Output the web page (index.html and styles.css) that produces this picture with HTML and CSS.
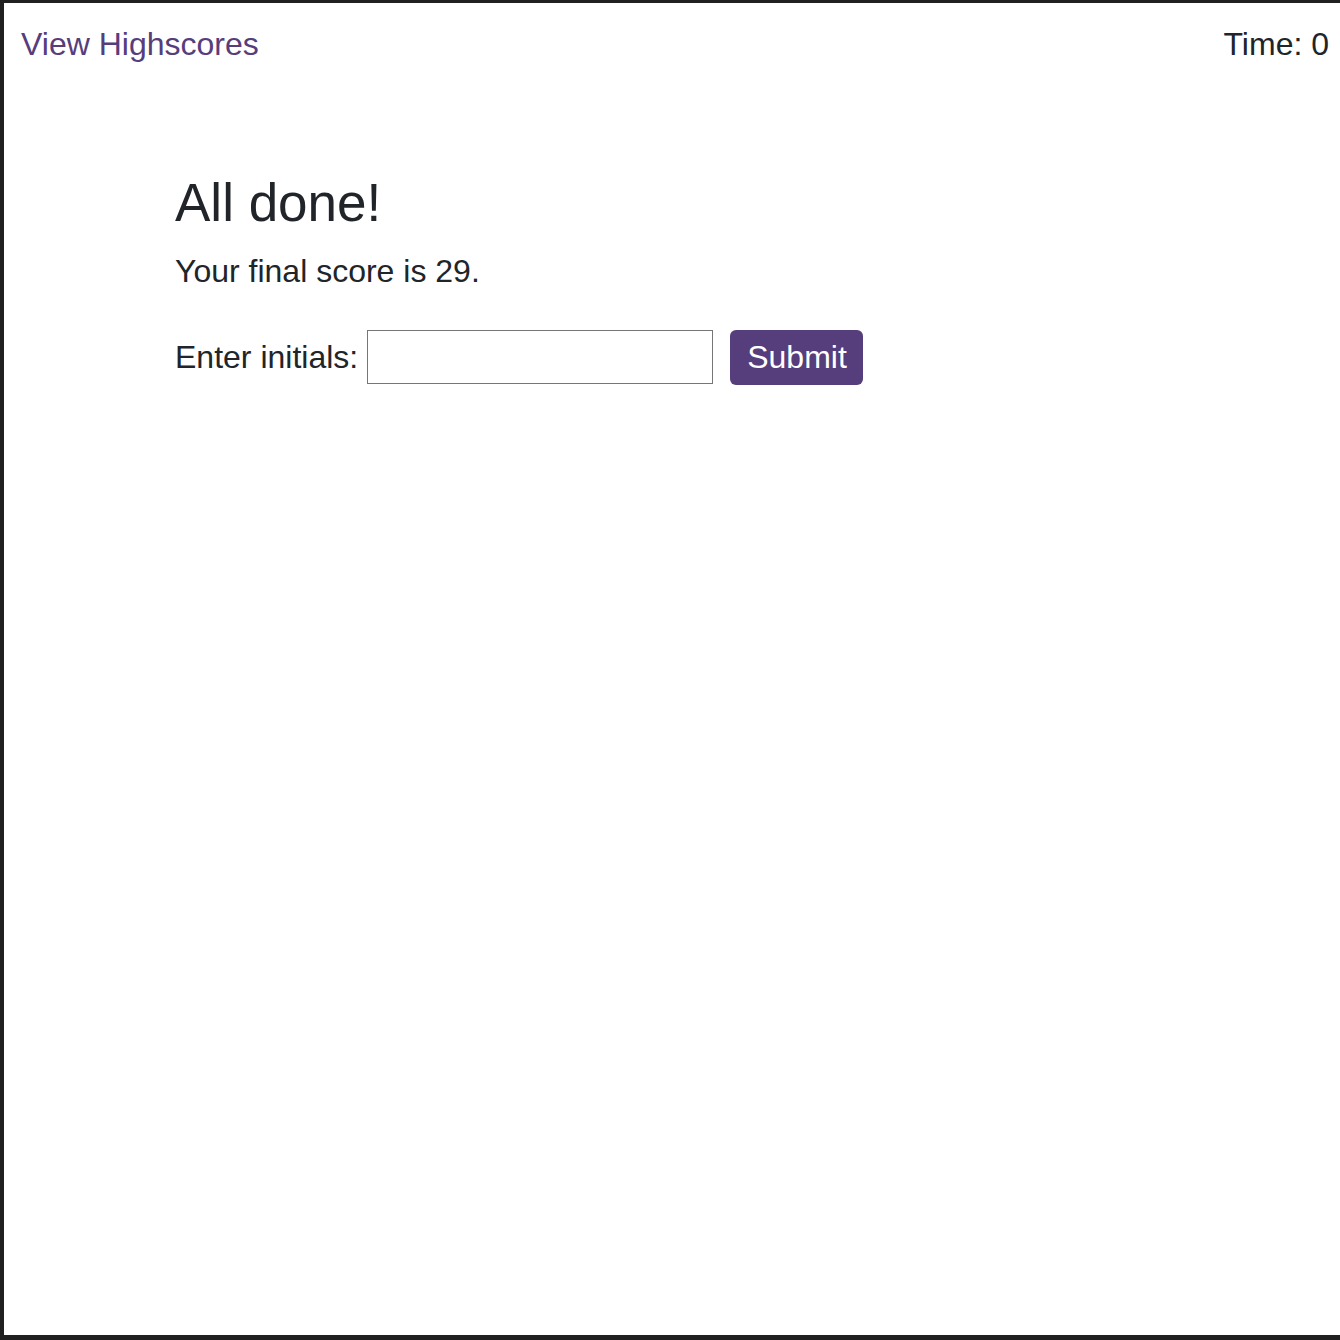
FILE: index.html
```html
<!DOCTYPE html>
<html>
<head>
<meta charset="utf-8">
<link rel="stylesheet" href="styles.css">
</head>
<body>
<div class="frame">
  <header class="topbar">
    <a class="highscores" href="#">View Highscores</a>
    <div class="timer">Time: 0</div>
  </header>
  <main class="content">
    <h1 class="title">All done!</h1>
    <p class="score">Your final score is 29.</p>
    <form class="entry">
      <label class="label" for="initials">Enter initials:</label>
      <input class="input" id="initials" type="text">
      <button class="submit" type="button">Submit</button>
    </form>
  </main>
</div>
</body>
</html>
```
FILE: styles.css
```css
html, body {
  margin: 0;
  padding: 0;
  background: #202020;
}
.frame {
  box-sizing: border-box;
  height: 1340px;
  background: #fff;
  border-top: 3px solid #202020;
  border-left: 4px solid #202020;
  border-bottom: 5px solid #202020;
  font-family: "Liberation Sans", Arial, sans-serif;
  font-size: 32px;
  color: #212529;
}
.topbar {
  display: flex;
  justify-content: space-between;
  align-items: flex-start;
  padding: 17px 11px 0 17px;
  line-height: 1.5;
}
.highscores {
  color: #563d7c;
  text-decoration: none;
}
.content {
  margin-left: 171px;
  padding-top: 103px;
}
.title {
  margin: 0;
  font-weight: 400;
  font-size: 53px;
  line-height: 1.2;
}
.score {
  margin: 12px 0 0;
  line-height: 1.5;
}
.entry {
  display: flex;
  align-items: center;
  margin-top: 35px;
}
.label {
  line-height: 1.5;
  margin-right: 9px;
}
.input {
  box-sizing: border-box;
  width: 346px;
  height: 54px;
  border: 1px solid #767676;
  margin: 0 17px 0 0;
  padding: 0;
  font: inherit;
}
.submit {
  box-sizing: border-box;
  height: 55px;
  padding: 0 16px 0 17px;
  border: 0;
  border-radius: 6px;
  background: #563d7c;
  color: #fff;
  font: inherit;
  line-height: 1;
}
```
